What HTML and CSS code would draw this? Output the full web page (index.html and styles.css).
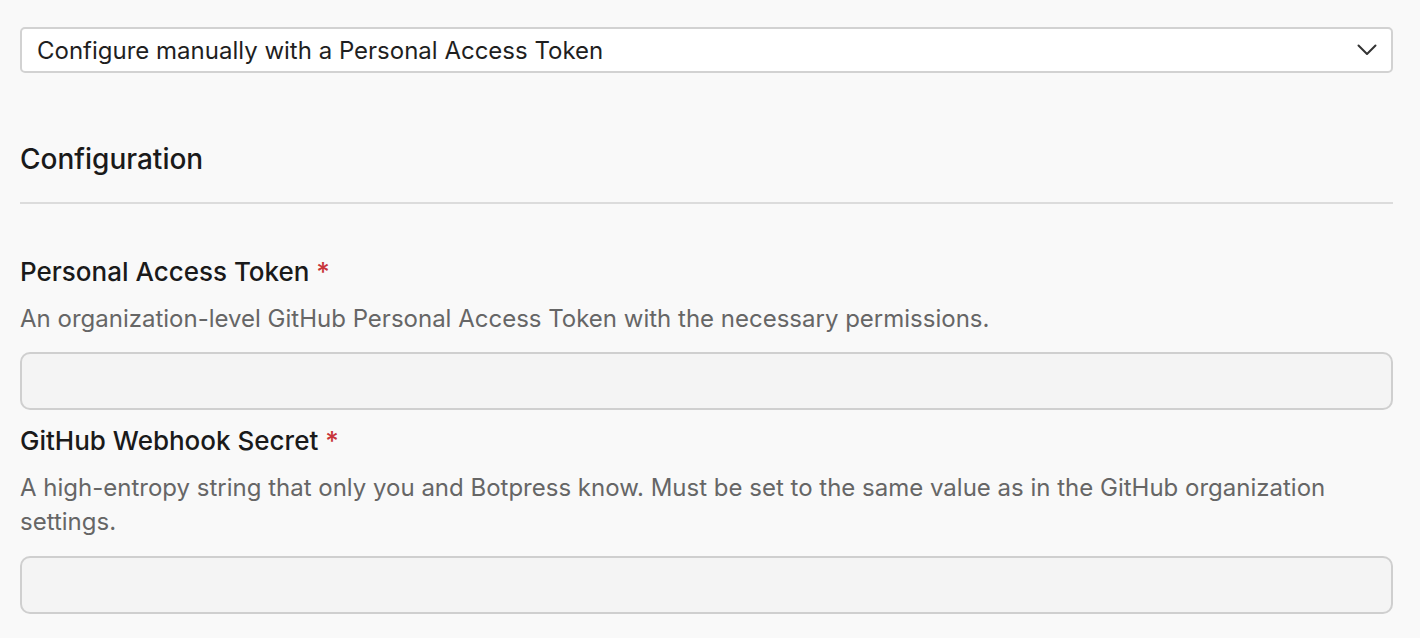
FILE: index.html
```html
<!DOCTYPE html>
<html>
<head>
<meta charset="utf-8">
<link rel="stylesheet" href="styles.css">
</head>
<body>
<div class="page">
  <div class="select">
    <span class="select-text">Configure manually with a Personal Access Token</span>
    <svg class="chevron" width="20" height="12" viewBox="0 0 20 12"><path d="M1.5 1.5 L10 10 L18.5 1.5" fill="none" stroke="#333" stroke-width="2" stroke-linecap="round" stroke-linejoin="round"/></svg>
  </div>
  <h2 class="section-title">Configuration</h2>
  <hr class="divider">
  <div class="field">
    <div class="label">Personal Access Token <span class="req">*</span></div>
    <div class="desc">An organization-level GitHub Personal Access Token with the necessary permissions.</div>
    <div class="input"></div>
  </div>
  <div class="field">
    <div class="label">GitHub Webhook Secret <span class="req">*</span></div>
    <div class="desc">A high-entropy string that only you and Botpress know. Must be set to the same value as in the GitHub organization settings.</div>
    <div class="input"></div>
  </div>
</div>
</body>
</html>
```
FILE: styles.css
```css
html, body {
  margin: 0;
  padding: 0;
  background: #f9f9f9;
  font-family: Inter, "Noto Sans", sans-serif;
  color: #1f1f1f;
}
.page {
  padding: 27px 27px 0 20px;
}
.select {
  height: 46px;
  box-sizing: border-box;
  border: 2px solid #d2d2d2;
  border-radius: 5px;
  background: #fff;
  display: flex;
  align-items: center;
  justify-content: space-between;
  padding: 0 14px 0 15px;
}
.select-text {
  font-size: 24px;
  color: #1f1f1f;
}
.section-title {
  margin: 69px 0 0 0;
  font-size: 28px;
  font-weight: 500;
  line-height: 34px;
  color: #1a1a1a;
}
.divider {
  border: none;
  border-top: 2px solid #dcdcdc;
  margin: 26px 0 0 0;
}
.field {
  display: flex;
  flex-direction: column;
}
.divider + .field {
  margin-top: 53px;
}
.field + .field {
  margin-top: 16px;
}
.label {
  font-size: 26px;
  font-weight: 500;
  line-height: 30px;
  color: #1a1a1a;
}
.req {
  color: #c8353a;
}
.desc {
  margin-top: 15px;
  font-size: 24px;
  line-height: 34px;
  color: #666;
}
.input {
  margin-top: 16px;
  height: 58px;
  box-sizing: border-box;
  border: 2px solid #cfcfcf;
  border-radius: 10px;
  background: #f4f4f4;
}
.field + .field .input {
  margin-top: 17px;
}
```
